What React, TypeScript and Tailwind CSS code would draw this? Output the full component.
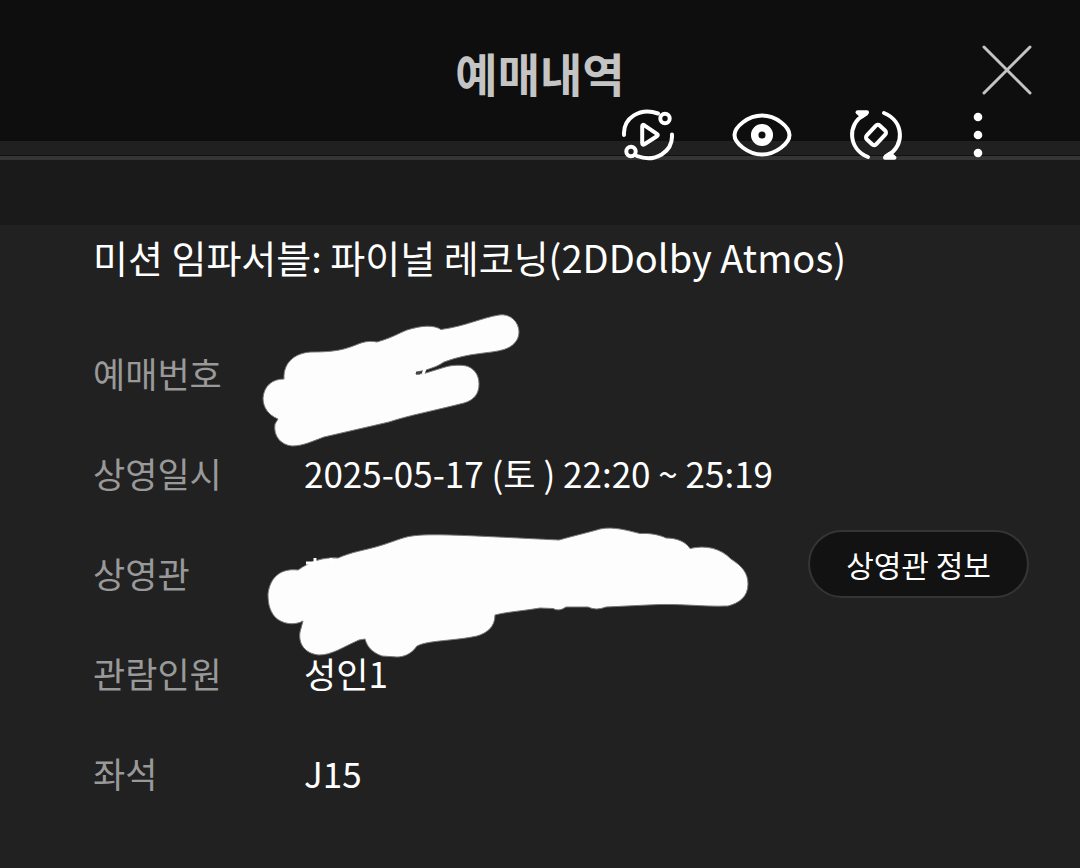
import React from 'react';

interface DetailRowProps {
  label: string;
  children: React.ReactNode;
  action?: React.ReactNode;
}

const ConvertIcon: React.FC = () => (
  <svg width="56" height="56" viewBox="620 107 56 56" fill="none" stroke="#fff" strokeWidth="4" strokeLinecap="round" strokeLinejoin="round">
    <path d="M624 135C623 118 640 107 658 113.500" />
    <path d="M672 134.500C673 152 655 163 637 156" />
    <circle cx="665" cy="118.500" r="4.700" />
    <circle cx="631" cy="151.500" r="4.700" />
    <path d="M642.200 126.500v16.500q0 2.500 2.200 1.200l12.500-8q1.800-1.200 0-2.400l-12.500-8.500q-2.200-1.300-2.200 1.200z" />
  </svg>
);

const EyeIcon: React.FC = () => (
  <svg width="64" height="56" viewBox="730 107 64 56" fill="none" stroke="#fff">
    <path d="M734.500 135C734.500 127 748 115.500 762 115.500S789.500 127 789.500 135S776 154.500 762 154.500S734.500 143 734.500 135Z" strokeWidth="4" strokeLinejoin="round" />
    <circle cx="762" cy="135" r="7.300" strokeWidth="7.500" />
  </svg>
);

const RotateIcon: React.FC = () => (
  <svg width="56" height="56" viewBox="848 107 56 56" fill="none" stroke="#fff" strokeWidth="4" strokeLinecap="round" strokeLinejoin="round">
    <path d="M868 157C848 149 847 124 864 115" />
    <path d="M884 113C904 121 905 146 888 155" />
    <path d="M857.500 112.300h9.500l-1 1.500-4 2.500z" fill="#fff" />
    <path d="M894.500 157.700h-9.500l1-1.500 4-2.500z" fill="#fff" />
    <rect x="869.500" y="125.500" width="13" height="19" rx="3" transform="rotate(43 876 135)" />
  </svg>
);

const MoreIcon: React.FC = () => (
  <svg width="12" height="56" viewBox="972 107 12 56" fill="#fff">
    <circle cx="978" cy="117" r="4.300" />
    <circle cx="978" cy="135" r="4.300" />
    <circle cx="978" cy="153" r="4.300" />
  </svg>
);

const NumberMark: React.FC = () => (
  <svg className="absolute -top-4 -left-11" width="264" height="140" viewBox="260 309 264 140" aria-hidden="true">
    <path
      d="M284 379C283 361 297 352 313 352C342 352 350 347 361 343C367 341 372 341 377 342C394 337 399 333 407 330C423 325 434 325 441 329.500C466 326 481 318 499 315C510 313 519 322 519 332C519 341 512 347 504 349.500C489 354 471 352 444 362C438 366 435 367 426 370L419 371.500L416 373V374L424 373.500L442 368C451 365 457 365 464 365.500C474 367 479 375 479 384C479 394 474 400 464 403C433 411 410 415 389 422L324 437C313 441 303 446 292 446C281 445 273 436 275 424L278 419C268 415 263 407 263 398C264 386 272 379 284 379Z"
      fill="#fdfdfd"
      stroke="#777"
      strokeWidth="1"
    />
    <path d="M416 373h4" stroke="#444" strokeWidth="3" />
    <path d="M425 369l-2 5" stroke="#fff" strokeWidth="3" />
  </svg>
);

const TheaterMark: React.FC = () => (
  <svg className="absolute top-0 -left-10" width="488" height="136" viewBox="264 525 488 136" aria-hidden="true">
    <path
      d="M298 570C310 562 321 557 338 558C351 552 366 550 379 546C390 543 403 537 412 536C432 533 475 536 559 540C573 536 590 532 600 529C614 526 629 531 640 533.500C651 533 660 535 666 538C677 538 686 542 690 548.500C706 545 720 548 731 559C742 566 748 573 748 584C748 597 739 603 728 606C702 607 678 603 648 605L606 607Q596 611 588 607H566Q559 612 553 608.500L540 608C522 611 506 612 495 615C495 627 487 633 477 636C455 641 429 640 417 646C411 655 402 657 397 657L382 656C371 652 367 646 365 639L359 640C343 647 332 655 319 655C306 654 298 645 300 632L303 621C294 626 282 624 275 617C269 610 268 602 268 594C270 577 281 568 298 570Z"
      fill="#fdfdfd"
      stroke="#777"
      strokeWidth="1"
    />
    <path d="M306 563h13M315 558v8M331 558v5" stroke="#fff" strokeWidth="3" />
  </svg>
);

const DetailRow: React.FC<DetailRowProps> = ({ label, children, action }) => (
  <div className="flex h-[100px] items-center text-[35px]">
    <dt className="w-[211px] shrink-0 pb-1 text-[#999999]">{label}</dt>
    <dd className="flex grow items-center self-stretch text-white">
      <div className="relative flex grow items-center self-stretch pb-1">{children}</div>
      {action}
    </dd>
  </div>
);

const App: React.FC = () => {
  return (
    <div className="min-h-screen bg-[#212121] font-['Noto_Sans_CJK_KR',sans-serif] text-white">
      {/* Header */}
      <header className="relative">
        <div className="flex h-[141px] items-start bg-[#0e0e0e] px-[46px] pt-10">
          <div className="w-[54px]" />
          <h1 className="grow text-center text-[46px] leading-[64px] font-bold text-[#c4c4c4]">예매내역</h1>
          <button type="button" aria-label="닫기" className="flex h-[60px] w-[54px] items-center justify-center">
            <svg width="54" height="54" viewBox="0 0 54 54" stroke="#c4c4c4" strokeWidth="3" strokeLinecap="round">
              <path d="M4 4L50 50M50 4L4 50" />
            </svg>
          </button>
        </div>
        <div className="h-[14px] bg-[#202020]" />
        <div className="h-[5px] border-t border-[#111111] bg-[#353535]" />
        <div className="h-[65px] bg-[#1a1a1a]" />

        {/* Floating viewer toolbar */}
        <div className="absolute top-[107px] right-24 flex items-center">
          <button type="button" aria-label="변환" className="mr-[54px]">
            <ConvertIcon />
          </button>
          <button type="button" aria-label="보기" className="mr-[54px]">
            <EyeIcon />
          </button>
          <button type="button" aria-label="회전" className="mr-[68px]">
            <RotateIcon />
          </button>
          <button type="button" aria-label="더보기">
            <MoreIcon />
          </button>
        </div>
      </header>

      {/* Booking details */}
      <main className="pr-[51px] pb-10 pl-[93px]">
        <h2 className="mb-9 text-[38px] leading-[64px]">미션 임파서블: 파이널 레코닝(2DDolby Atmos)</h2>
        <dl>
          <DetailRow label="예매번호">
            <NumberMark />
          </DetailRow>
          <DetailRow label="상영일시">2025-05-17 (토 ) 22:20 ~ 25:19</DetailRow>
          <DetailRow
            label="상영관"
            action={
              <button
                type="button"
                className="mt-[5px] h-[68px] w-[221px] shrink-0 self-start rounded-full border-2 border-[#353535] bg-[#121212] text-[30px] leading-[60px]"
              >
                상영관 정보
              </button>
            }
          >
            <TheaterMark />
          </DetailRow>
          <DetailRow label="관람인원">성인1</DetailRow>
          <DetailRow label="좌석">J15</DetailRow>
        </dl>
      </main>
    </div>
  );
};

export default App;
